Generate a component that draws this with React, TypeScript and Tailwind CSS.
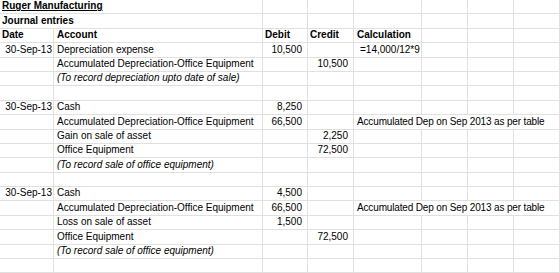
import React from "react";

type Cell = {
  text?: string;
  span?: number;
  align?: "left" | "right";
  bold?: boolean;
  italic?: boolean;
  underline?: boolean;
  pad?: string;
};

// one row = list of cells, spans add up to 8 columns
const blank = (): Cell[] => Array.from({ length: 8 }, () => ({}));

const num = (text: string): Cell => ({ text, align: "right", pad: "pr-[5px]" });
const date: Cell = { text: "30-Sep-13", align: "right", pad: "pr-[1px]" };
const acct = (text: string, italic = false): Cell => ({ text, italic, pad: "pl-[3px]" });
const note: Cell = {
  text: "Accumulated Dep on Sep 2013 as per table",
  span: 4,
  pad: "pl-[3px] tracking-[-0.15px]",
};

const rows: Cell[][] = [
  [{ text: "Ruger Manufacturing", span: 2, bold: true, underline: true }, {}, {}, {}, {}, {}, {}],
  [{ text: "Journal entries", span: 2, bold: true }, {}, {}, {}, {}, {}, {}],
  [
    { text: "Date", bold: true },
    { text: "Account", bold: true, pad: "pl-[3px]" },
    { text: "Debit", bold: true },
    { text: "Credit", bold: true },
    { text: "Calculation", bold: true, pad: "pl-[3px]" },
    {},
    {},
    {},
  ],
  [date, acct("Depreciation expense"), num("10,500"), {}, { text: "=14,000/12*9", pad: "pl-[6px]" }, {}, {}, {}],
  [{}, acct("Accumulated Depreciation-Office Equipment"), {}, num("10,500"), {}, {}, {}, {}],
  [{}, acct("(To record depreciation upto date of sale)", true), {}, {}, {}, {}, {}, {}],
  blank(),
  [date, acct("Cash"), num("8,250"), {}, {}, {}, {}, {}],
  [{}, acct("Accumulated Depreciation-Office Equipment"), num("66,500"), {}, note],
  [{}, acct("Gain on sale of asset"), {}, num("2,250"), {}, {}, {}, {}],
  [{}, acct("Office Equipment"), {}, num("72,500"), {}, {}, {}, {}],
  [{}, acct("(To record sale of office equipment)", true), {}, {}, {}, {}, {}, {}],
  blank(),
  [date, acct("Cash"), num("4,500"), {}, {}, {}, {}, {}],
  [{}, acct("Accumulated Depreciation-Office Equipment"), num("66,500"), {}, note],
  [{}, acct("Loss on sale of asset"), num("1,500"), {}, {}, {}, {}, {}],
  [{}, acct("Office Equipment"), {}, num("72,500"), {}, {}, {}, {}],
  [{}, acct("(To record sale of office equipment)", true), {}, {}, {}, {}, {}, {}],
  blank(),
];

const spanClass: Record<number, string> = {
  1: "col-span-1",
  2: "col-span-2",
  4: "col-span-4",
};

export default function App() {
  return (
    <div className="w-[560px] h-[273px] overflow-hidden bg-white">
      <div
        className="grid grid-cols-[54px_209px_45px_46px_68px_46px_46px_46px] auto-rows-[14.4px] text-[10px] leading-none text-black"
        style={{ fontFamily: "'Liberation Sans', Arial, sans-serif" }}
      >
        {rows.map((row, r) =>
          row.map((cell, c) => (
            <div
              key={`${r}-${c}`}
              className={[
                spanClass[cell.span ?? 1],
                "flex items-end pb-[2px] whitespace-nowrap overflow-visible border-r border-b border-[#e0e0e0]",
                cell.align === "right" ? "justify-end" : "justify-start",
                cell.pad ?? "pl-[2px]",
                cell.bold ? "font-bold" : "",
                cell.italic ? "italic" : "",
                cell.underline ? "underline" : "",
              ].join(" ")}
            >
              {cell.text}
            </div>
          ))
        )}
      </div>
    </div>
  );
}
